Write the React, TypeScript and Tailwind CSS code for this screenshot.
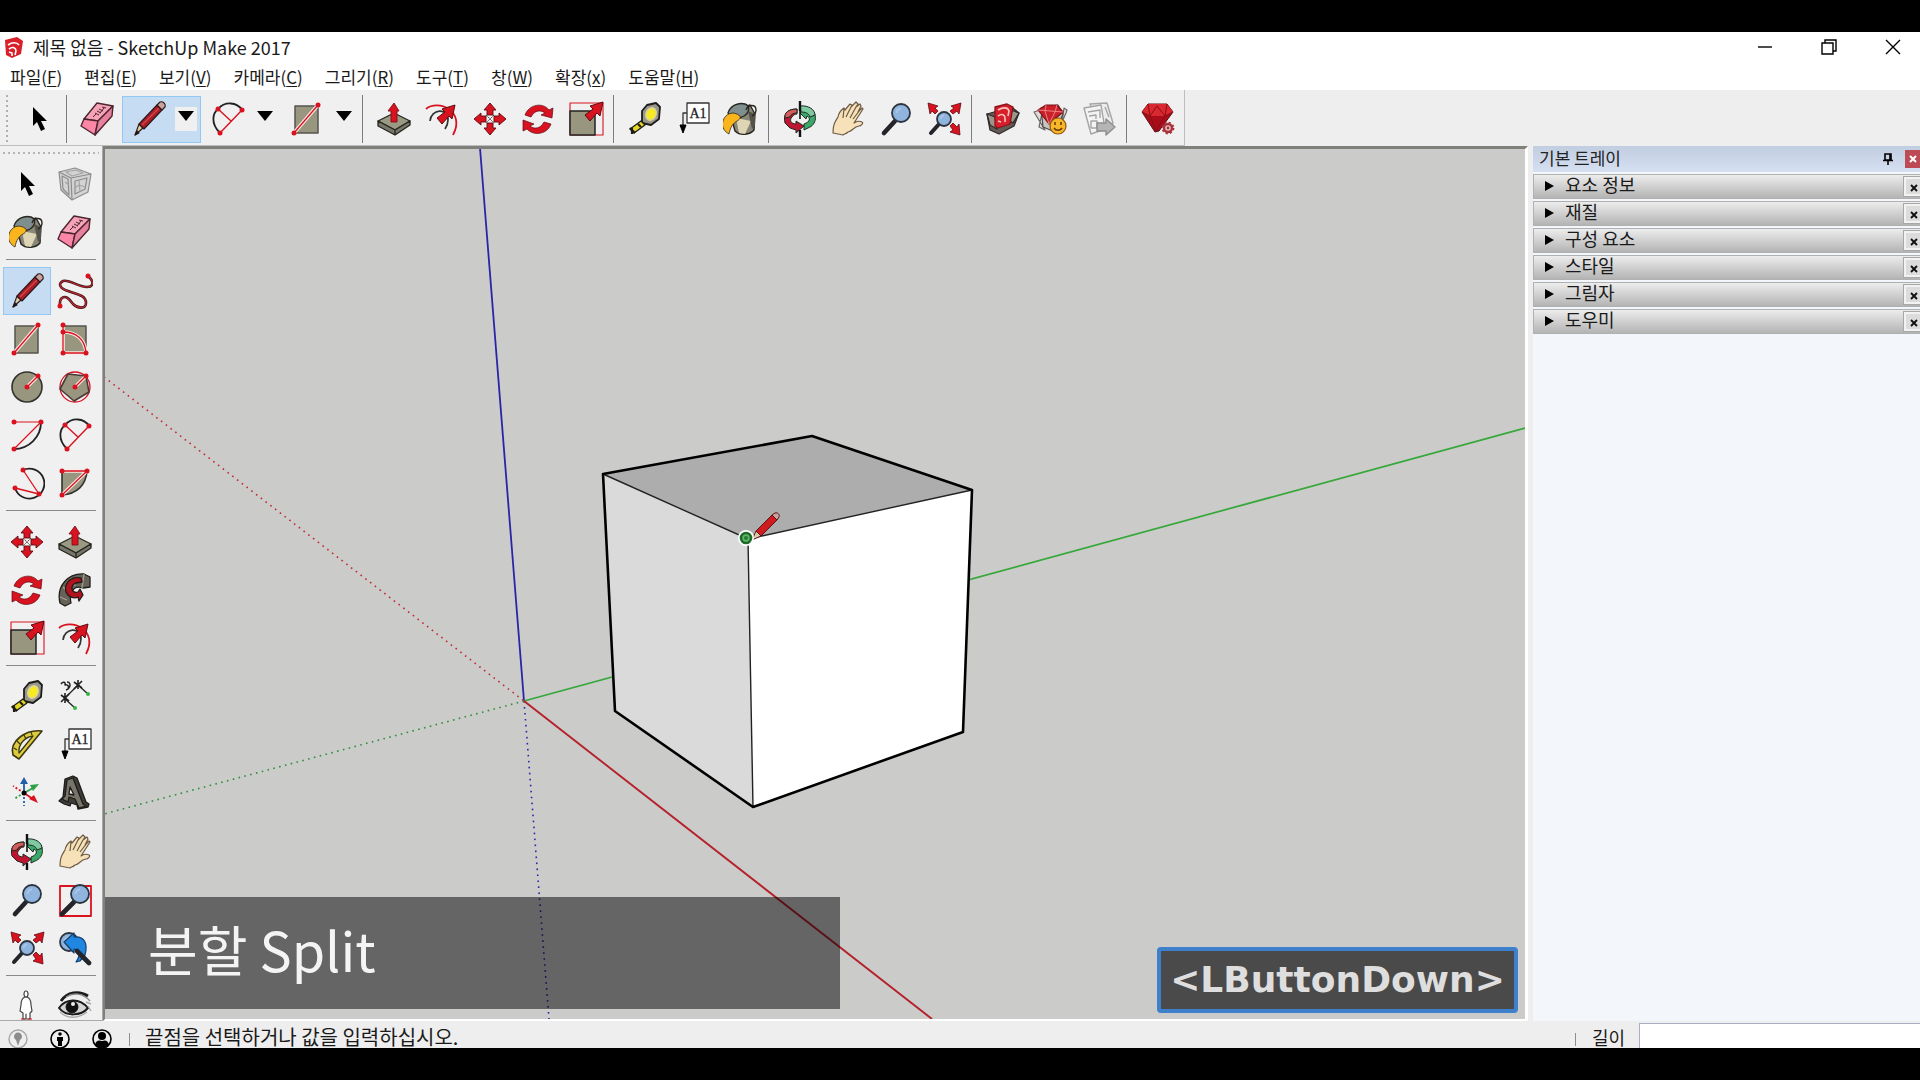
import type { ReactNode } from "react";
import clsx from "clsx";

const RED = "#d9121f";
const OLIVE = "#98967f";

function Icon({ children }: { children: ReactNode }) {
  return (
    <svg viewBox="0 0 36 36" className="size-9 shrink-0" fill="none" strokeLinejoin="round" aria-hidden="true">
      {children}
    </svg>
  );
}

const Dots = ({ at }: { at: [number, number][] }) => (
  <g fill={RED}>
    {at.map(([x, y]) => (
      <circle key={`${x}-${y}`} cx={x} cy={y} r="2.5" />
    ))}
  </g>
);

const Guide = ({ d }: { d: string }) => (
  <g>
    <path d={d} stroke="#fbe9e4" strokeWidth="3.6" />
    <path d={d} stroke={RED} strokeWidth="1.3" />
  </g>
);

const Lens = ({ cx, cy, r }: { cx: number; cy: number; r: number }) => (
  <g>
    <circle cx={cx} cy={cy} r={r} fill="#8fb4dd" stroke="#2c3440" strokeWidth="1.8" />
    <path d={`M${cx - r / 2} ${cy}a${r / 2} ${r / 2} 0 0 1 ${r / 2} -${r / 2}`} stroke="#a9c6e8" strokeWidth="2" />
  </g>
);

const DiagonalArrow = ({ x, y }: { x: number; y: number }) => (
  <path
    transform={`translate(${x} ${y})`}
    d="M18 0 5 4l3 3-8 6 5 6 7-8 3 3z"
    fill={RED}
    stroke="#5c0c12"
    strokeWidth="1"
  />
);

const icons = {
  select: <path d="M12 6v19l4-4 4 9 4-2-4-8h6z" fill="#000" />,
  component: (
    <g stroke="#8d8d8d" strokeWidth="1.2">
      <path d="M2 6 18 2l16 6-3 18-16 8L4 24z" fill="#d3d3d3" />
      <path d="M2 6l12 6 20-4M14 12l1 22M5 10l6 3 1 16-6-6zM18 15l12-3-2 11-10 5z" />
      <path d="M9 6l10-2 7 3-11 3zM8 16l4 3M18 22l4-3 6 2M22 14l1 12" stroke="#a5a5a5" />
    </g>
  ),
  bucket: (
    <g stroke="#28261f" strokeWidth="1.4">
      <path d="M7 12 12 30c5 5 15 4 19-1l1-16-5-9z" fill="#8a8678" />
      <path d="M13 17l3 15 6 1 6-13z" fill="#ddd5b4" stroke="none" />
      <path d="M25 10l4 18 3-3V13z" fill="#55524a" stroke="none" />
      <path d="M5 12C7 5 15 1 22 3c5 2 5 8-1 12-5 3-11 3-16-3z" fill="#7f8f90" />
      <path d="M23 9c2-6 10-6 10 0 0 3-2 5-4 6" />
      <path d="M17 15C10 9 2 13 0 20c-2 6 2 11 6 13 1-6 4-11 8-13 2-1 4-3 3-5z" fill="#fab51c" strokeWidth="0.8" />
    </g>
  ),
  eraser: (
    <g stroke="#4b2630" strokeWidth="1.4">
      <path d="M4 18 17 2l16 3-15 15z" fill="#f6a3b8" />
      <path d="M4 18 1 25l14 9 3-14z" fill="#fb86a6" />
      <path d="M18 20 33 5l-1 10-17 19z" fill="#e8819d" />
      <path d="M13 16l3-3M15 12l4 2M17 10l4 2M19 8l4 2M22 6l4 1M20 12l4-5" strokeWidth="1" />
    </g>
  ),
  pencil: (
    <g stroke="#2b1717" strokeWidth="1.1">
      <path d="M4 34l4-11 4 4z" fill="#d8cda6" />
      <path d="M8 23 26 4l5 5-18 19z" fill="#a81d26" />
      <path d="M11 24 28 7" stroke="#d0484e" strokeWidth="1.3" />
      <path d="M26 4l3-3c3-1 6 2 5 5l-3 3z" fill="#c9a3a0" />
      <path d="M4 34l2-4 2 2z" fill="#111" />
    </g>
  ),
  freehand: (
    <g>
      <path
        d="M31 3c7 6 5 11-1 11C20 14 13 6 6 8c-6 3-2 8 5 10 8 3 18 4 18 12 0 6-8 6-13 1-4-5-7-9-11-6-3 2-2 5-2 9"
        stroke="#3b1717"
        strokeWidth="2.6"
      />
      <path
        d="M31 3c7 6 5 11-1 11C20 14 13 6 6 8c-6 3-2 8 5 10 8 3 18 4 18 12 0 6-8 6-13 1-4-5-7-9-11-6-3 2-2 5-2 9"
        stroke="#c02531"
        strokeWidth="1.2"
      />
      <Dots at={[[31, 3], [3, 33]]} />
    </g>
  ),
  rectangle: (
    <g>
      <path d="M6 5h23v27H6z" fill={OLIVE} stroke="#55544c" strokeWidth="1.5" />
      <Guide d="M5 32 29 4" />
      <Dots at={[[5, 32], [29, 4]]} />
    </g>
  ),
  rotatedRect: (
    <g>
      <path d="M6 5h23v27H6z" fill={OLIVE} stroke="#55544c" strokeWidth="1.5" />
      <Guide d="M6 4v28h23M6 11c13 0 22 7 23 21" />
      <Dots at={[[6, 4], [6, 11], [6, 32], [29, 32]]} />
    </g>
  ),
  circle: (
    <g>
      <circle cx="18" cy="18" r="15" fill={OLIVE} stroke="#33332e" strokeWidth="1.6" />
      <Guide d="M18 18 29 7" />
      <Dots at={[[18, 18], [29, 7]]} />
    </g>
  ),
  polygon: (
    <g>
      <circle cx="18" cy="18" r="15" stroke={RED} strokeWidth="1.3" />
      <path d="M11 5 29 7l3 16-15 9L3 20z" fill={OLIVE} stroke="#4a3a36" strokeWidth="1.6" />
      <Guide d="M18 18 29 7" />
      <Dots at={[[18, 18], [29, 7]]} />
    </g>
  ),
  arc: (
    <g>
      <path d="M5 32C20 32 32 20 32 5" stroke="#222" strokeWidth="1.8" />
      <path d="M5 5h27L5 32" stroke={RED} strokeWidth="1.2" />
      <Dots at={[[5, 5], [32, 5], [5, 32]]} />
    </g>
  ),
  twoPointArc: (
    <g>
      <path d="M10 32C0 22 3 12 8 8 15 0 27 1 32 9" stroke="#222" strokeWidth="1.8" />
      <path d="M10 32 32 9M8 8l13 12" stroke={RED} strokeWidth="1.4" />
      <Dots at={[[8, 8], [32, 9], [10, 32]]} />
    </g>
  ),
  threePointArc: (
    <g>
      <path d="M14 5a15 15 0 1 1-8 18" stroke="#222" strokeWidth="1.8" />
      <path d="M14 5l16 24L6 23" stroke={RED} strokeWidth="1.3" />
      <Dots at={[[14, 5], [6, 23], [30, 29]]} />
    </g>
  ),
  pie: (
    <g>
      <path d="M5 6h25C29 20 20 29 5 30z" fill={OLIVE} stroke="#33332e" strokeWidth="1.6" />
      <Guide d="M5 6h25L5 30" />
      <Dots at={[[5, 6], [30, 6], [5, 30]]} />
    </g>
  ),
  move: (
    <g fill={RED} stroke="#5c0c12" strokeWidth="0.9">
      {[0, 90, 180, 270].map((a) => (
        <path key={a} transform={`rotate(${a} 18 18)`} d="M18 2l6 7h-3v5h-6V9h-3z" />
      ))}
      <path d="M14 14l8 8M22 14l-8 8" stroke="#444" strokeWidth="1" strokeDasharray="2 1" />
    </g>
  ),
  rotate: (
    <g fill={RED} stroke="#5c0c12" strokeWidth="0.7">
      <path d="M5 14C9 3 23 1 29 9l4-2-1 10-11-3 4-2c-5-4-11-2-14 4z" />
      <path d="M31 23C27 34 13 35 7 28l-4 2 0-11 11 4-4 2c5 4 11 2 14-4z" />
    </g>
  ),
  pushPull: (
    <g stroke="#26261f" strokeWidth="1.3">
      <path d="M2 20 18 12l16 8-15 9z" fill="#9a9983" />
      <path d="M2 20v5l17 9v-5zM34 20v4l-15 10v-5z" fill="#77766a" />
      <path d="M18 2l5 8h-2v11h-6V10h-3z" fill={RED} stroke="#7d1016" strokeWidth="0.9" />
    </g>
  ),
  followMe: (
    <g stroke="#1e1d1b" strokeWidth="1.3">
      <path d="M3 31C-1 14 11 1 27 2l6 3v10l-7 1C16 12 12 22 14 31l-6 3z" fill="#676258" />
      <path d="M3 25l7 3M6 15l6 6M14 6l4 8M27 2l-2 14" stroke="#a5a090" />
      <path d="M24 6C12 4 7 13 9 20c2 5 8 7 12 5l1 4 4-6-3-6-2 3c-6 2-9-6-2-9l6-1z" fill="#b3121d" />
    </g>
  ),
  scale: (
    <g>
      <path d="M2 2h33v32H2z" stroke={RED} strokeWidth="1.1" />
      <path d="M2 10h25v24H2z" fill={OLIVE} stroke="#222" strokeWidth="1.5" />
      <DiagonalArrow x={17} y={1} />
    </g>
  ),
  offset: (
    <g>
      <path d="M2 8C14-2 42 10 29 34" stroke={RED} strokeWidth="1.8" />
      <path d="M6 20c1-12 18-14 18-1 0 4-1 6-3 9" stroke="#333" strokeWidth="1.7" />
      <DiagonalArrow x={13} y={4} />
    </g>
  ),
  tape: (
    <g stroke="#1c1c18" strokeWidth="1.3">
      <path d="M15 10 20 4l9-2 4 4-1 12-8 6-9-2z" fill="#99968c" strokeWidth="1.8" />
      <ellipse cx="24" cy="13" rx="5" ry="6.5" transform="rotate(25 24 13)" fill="#f7ea21" stroke="#d8d4a8" />
      <path d="M14 20l4 4L7 32l-4-4z" fill="#e6d822" />
      <path d="M3 27l5 5M5 27v6M11 23l3 3" strokeWidth="2.2" />
    </g>
  ),
  dimension: (
    <g stroke="#222" strokeWidth="1.3">
      <path d="M8 19 21 6M7 19l11 10M21 6l10 9" />
      <path d="M4 16l8 6M12 15l-8 8M17 3l8 6M25 2l-8 8M21 1v9M8 14v10" strokeWidth="1.6" />
      <path d="M4 5c2-3 5-2 4 1 4-1 5 4 1 5M10 3c3 0 4 3 2 6" strokeWidth="1.5" />
      <g fill="#38b54a" stroke="none">
        <circle cx="18" cy="29" r="2" />
        <circle cx="31" cy="15" r="2" />
      </g>
    </g>
  ),
  protractor: (
    <g>
      <path d="M33 4C17 2 0 14 4 28l6 4z" fill="#dccb3b" stroke="#3d3814" strokeWidth="1.6" />
      <path d="M24 9C16 10 9 17 10 26z" fill="#efeeee" stroke="#3d3814" strokeWidth="1.3" />
      <path d="M5 21l3 2M8 14l3 3M15 8l2 4M22 5l1 3" stroke="#3d3814" strokeWidth="1.2" />
    </g>
  ),
  text: (
    <g>
      <path d="M12 2h22v20H12z" fill="#fff" stroke="#333" strokeWidth="1.3" />
      <path d="M12 12H8v14" stroke="#333" strokeWidth="1.3" />
      <path d="M5 24h6l-3 8z" fill="#000" stroke="#000" />
      <text x="23" y="17" textAnchor="middle" fontSize="14" fill="#222" stroke="#222" strokeWidth="0.3" className="font-['Liberation_Serif',serif]">
        A1
      </text>
    </g>
  ),
  axes: (
    <g strokeWidth="1.8">
      <path d="M15 18V8" stroke="#1f5fa8" />
      <path d="M11 9l4-7 4 7z" fill="#1f5fa8" />
      <path d="M15 18l9-5" stroke="#2e9e45" />
      <path d="M21 10l9-1-6 7z" fill="#2e9e45" />
      <path d="M15 18l9 6" stroke={RED} />
      <path d="M20 24l9 4-4-8z" fill={RED} />
      <path d="M15 18v13" stroke="#1f5fa8" strokeDasharray="2 2" />
      <path d="M15 18 5 24" stroke="#2e9e45" strokeDasharray="2 2" />
      <path d="M15 18 4 11" stroke={RED} strokeDasharray="2 2" />
      <circle cx="15" cy="18" r="2.5" fill="#000" />
    </g>
  ),
  text3d: (
    <g stroke="#1d1c1a" strokeWidth="1.3">
      <path d="M8 4l8-3 4 2 9 24 3 2-1 3-10 2-1-4-6-2-1 3-6-2-5-3 4-4z" fill="#3f3d38" />
      <path d="M10 5l6-2 10 26 3 2-7 2-4-9-6-2-1 5-6-3 3-3z" fill="#77746a" />
      <path d="M13 12l4 8-5-1z" fill="#f1f0f1" />
    </g>
  ),
  orbit: (
    <g stroke="#1d2a22" strokeWidth="1">
      <path d="M20 6l8 2c8 4 7 16-2 19l-4 2v-6c6-2 7-6 3-8l-1 3-6-6z" fill="#3ba768" />
      <path d="M18 5c9-1 15 4 15 9l-5 2c-1-4-5-5-9-5z" fill="#7fc9a0" />
      <path d="M15 8C4 8 1 15 3 22l5 5 6 2v3l8-7-8-5v3c-5 0-7-4-4-7 1-2 3-3 5-3z" fill="#c01530" />
      <path d="M15 8C6 8 2 12 3 17l5-1c1-3 4-4 7-4z" fill="#d35b59" />
      <path d="M18 0v10M18 29v7" stroke="#111" strokeWidth="2.4" />
      <path d="M18 10v8" stroke="#111" strokeWidth="1.6" />
    </g>
  ),
  hand: (
    <path
      d="M3 32c0-9 2-11 5-16 1-5 3-7 6-9l1 2 5-6 2 1-1 2 5-5 2 2-2 3 4-3 1 2-3 6 4-4 1 1-9 14c2-1 4-3 8-1 2 1-1 4-3 4-6 1-6 5-11 6-2 2-4 2-5 3z M14 8l-1 9M21 6l-5 10M26 6l-6 11M30 9l-7 9"
      fill="#f7e1b8"
      stroke="#6d5b45"
      strokeWidth="1.2"
    />
  ),
  zoom: (
    <g>
      <path d="M17 20 6 32" stroke="#23252a" strokeWidth="4.6" strokeLinecap="round" />
      <Lens cx={23} cy={12} r={9} />
    </g>
  ),
  zoomWindow: (
    <g>
      <path d="M3 4h31v30H3z" stroke={RED} strokeWidth="1.8" />
      <path d="M17 20 5 32" stroke="#23252a" strokeWidth="4.6" strokeLinecap="round" />
      <Lens cx={23} cy={12} r={9} />
    </g>
  ),
  zoomExtents: (
    <g>
      <path d="M14 22 5 32" stroke="#23252a" strokeWidth="4" strokeLinecap="round" />
      <Lens cx={18} cy={18} r={7} />
      <g fill={RED} stroke="#5c0c12" strokeWidth="0.8">
        <path d="M2 2l10 3-3 2 3 3-3 3-3-3-2 3zM35 2l-2 11-2-3-4 3-3-3 4-3-3-2zM34 34l-10-3 3-2-3-4 3-3 4 4 2-3z" />
      </g>
    </g>
  ),
  zoomPrevious: (
    <g>
      <Lens cx={12} cy={12} r={9} />
      <path d="M7 12 17 3v4c11-1 14 7 11 18l-5 6-4 1c4-6 5-11-2-13v4z" fill="#2086e0" stroke="#12406d" strokeWidth="1.2" />
      <path d="M20 21 32 33" stroke="#23252a" strokeWidth="4.6" strokeLinecap="round" />
    </g>
  ),
  warehouse: (
    <g strokeWidth="1.3">
      <path d="M2 13l7-2 18-5 2 2 5 4-5 13-15 8-9-4z" fill="#625b55" stroke="#2f2b29" />
      <path d="M26 9l8 3-6 10-3-2zM2 13l8 3 2 12-7-4z" fill="#9d968c" stroke="#2f2b29" />
      <path d="M10 6 22 3l6 3-3 17-12 4-3-2z" fill="#d61f2a" stroke="#8e1118" />
      <path d="M13 9c5-3 10-3 11 1l-1 5M13 15c4-3 7-1 7 2v4M13 20l3 1" stroke="#f6c3c1" strokeWidth="1.6" />
    </g>
  ),
  extensions: (
    <g strokeWidth="1.2">
      <path d="M1 11l9-3-4 18 6 3zM33 12l-4 9 2-14 3 2z" fill="#ddd9d7" stroke="#6b6765" />
      <path d="M8 7l2 19 12 5 8-18-5-9z" fill="#c9c4c2" stroke="#4b4745" />
      <path d="M5 9l8-5h11l6 7-14 12z" fill="#c9202a" stroke="#7d1016" />
      <path d="M5 9l25 2M13 4l-1 6 4 13 6-12 2-7" stroke="#f08b8c" strokeWidth="0.9" />
      <circle cx="25" cy="25" r="8" fill="#f8b62b" stroke="#8d5a0c" />
      <path d="M22 21v3M28 21v3M21 27c2 3 6 3 8 0" stroke="#6a3d06" strokeWidth="1.6" />
    </g>
  ),
  layout: (
    <g stroke="#a5a5a5" strokeWidth="1.4">
      <path d="M9 3l17-1 6 20-12 6z" fill="#ececec" />
      <path d="M3 7l17-3 4 24-14 5z" fill="#f4f4f4" />
      <path d="M7 11l12-2v8M8 15l7-1v4M10 20h6v7h-6zM24 6l4 10" />
      <path d="M16 22h9v-4l9 8-9 8v-4h-9z" fill="#b5b5b5" stroke="#8d8d8d" />
    </g>
  ),
  ruby: (
    <g strokeWidth="1">
      <path d="M2 11l6-8h19l6 8-14 19-4 1z" fill="#a90d19" stroke="#5c0c12" />
      <path d="M2 11l6-8h19l6 8-8 4H10z" fill="#d92830" />
      <path d="M2 11l8 4 6 15 9-15 8-4M8 3l2 12 7-10 8 10 2-12" stroke="#8a0d16" />
      <circle cx="28" cy="27" r="4" fill="#e8c5c5" stroke="#a83239" strokeWidth="2.4" />
      <circle cx="28" cy="27" r="5.6" stroke="#a83239" strokeWidth="1.6" strokeDasharray="2.2 2.2" />
      <circle cx="28" cy="27" r="1.4" fill="#a83239" />
    </g>
  ),
  person: (
    <g fill="#fff" stroke="#444" strokeWidth="1.2">
      <path d="M16 8c-3 1-4 4-4 8l-1 6 3 2v6h3v-5 5h4v-6l2-2-1-6c0-4-1-7-4-8z" />
      <ellipse cx="17" cy="5" rx="2" ry="3" />
      <path d="M12 30h4M19 30h4" stroke={RED} />
    </g>
  ),
  eye: (
    <g stroke="#1b1b1b">
      <path d="M4 12C10 3 22 1 31 7" strokeWidth="2.8" />
      <path d="M9 8C16 3 26 4 33 12" stroke="#888" strokeWidth="1.4" />
      <path d="M2 19C8 10 22 8 31 19c-7 8-22 9-29 0z" fill="#d5d5d5" strokeWidth="2" />
      <circle cx="15" cy="18" r="6" fill="#111" />
      <circle cx="16" cy="15" r="2" fill="#eee" stroke="none" />
      <path d="M3 23c7 7 18 7 27 0M29 13l5 2M31 17l3 5" stroke="#aaa" strokeWidth="1.4" />
    </g>
  ),
};

type IconName = keyof typeof icons;
type Tool = { icon: IconName; label: string; menu?: boolean; active?: boolean };

const toolbar: Tool[][] = [
  [{ icon: "select", label: "선택" }],
  [
    { icon: "eraser", label: "지우개" },
    { icon: "pencil", label: "선", menu: true, active: true },
    { icon: "twoPointArc", label: "호", menu: true },
    { icon: "rectangle", label: "직사각형", menu: true },
  ],
  [
    { icon: "pushPull", label: "밀기/끌기" },
    { icon: "offset", label: "오프셋" },
    { icon: "move", label: "이동" },
    { icon: "rotate", label: "회전" },
    { icon: "scale", label: "배율" },
  ],
  [
    { icon: "tape", label: "줄자" },
    { icon: "text", label: "텍스트" },
    { icon: "bucket", label: "페인트 통" },
  ],
  [
    { icon: "orbit", label: "궤도" },
    { icon: "hand", label: "이동 보기" },
    { icon: "zoom", label: "확대/축소" },
    { icon: "zoomExtents", label: "범위 확대" },
  ],
  [
    { icon: "warehouse", label: "3D Warehouse" },
    { icon: "extensions", label: "Extension Warehouse" },
    { icon: "layout", label: "LayOut" },
  ],
  [{ icon: "ruby", label: "확장 관리자" }],
];

const palette: Tool[][] = [
  [
    { icon: "select", label: "선택" },
    { icon: "component", label: "구성 요소 만들기" },
    { icon: "bucket", label: "페인트 통" },
    { icon: "eraser", label: "지우개" },
  ],
  [
    { icon: "pencil", label: "선", active: true },
    { icon: "freehand", label: "자유곡선" },
    { icon: "rectangle", label: "직사각형" },
    { icon: "rotatedRect", label: "회전된 직사각형" },
    { icon: "circle", label: "원" },
    { icon: "polygon", label: "다각형" },
    { icon: "arc", label: "호" },
    { icon: "twoPointArc", label: "2점 호" },
    { icon: "threePointArc", label: "3점 호" },
    { icon: "pie", label: "파이" },
  ],
  [
    { icon: "move", label: "이동" },
    { icon: "pushPull", label: "밀기/끌기" },
    { icon: "rotate", label: "회전" },
    { icon: "followMe", label: "따라가기" },
    { icon: "scale", label: "배율" },
    { icon: "offset", label: "오프셋" },
  ],
  [
    { icon: "tape", label: "줄자" },
    { icon: "dimension", label: "치수" },
    { icon: "protractor", label: "각도기" },
    { icon: "text", label: "텍스트" },
    { icon: "axes", label: "축" },
    { icon: "text3d", label: "3D 텍스트" },
  ],
  [
    { icon: "orbit", label: "궤도" },
    { icon: "hand", label: "이동 보기" },
    { icon: "zoom", label: "확대/축소" },
    { icon: "zoomWindow", label: "창 확대" },
    { icon: "zoomExtents", label: "범위 확대" },
    { icon: "zoomPrevious", label: "이전" },
  ],
  [
    { icon: "person", label: "카메라 배치" },
    { icon: "eye", label: "둘러보기" },
  ],
];

const menus = [
  ["파일", "F"],
  ["편집", "E"],
  ["보기", "V"],
  ["카메라", "C"],
  ["그리기", "R"],
  ["도구", "T"],
  ["창", "W"],
  ["확장", "x"],
  ["도움말", "H"],
];

const trays = ["요소 정보", "재질", "구성 요소", "스타일", "그림자", "도우미"];

function TitleBar() {
  return (
    <header className="flex h-8 shrink-0 items-center bg-white pb-[2px] pl-1">
      <svg viewBox="0 0 20 22" className="h-[22px] w-5" aria-hidden="true">
        <path d="M1 4 13 1l6 4-2 13-9 4-6-3z" fill="#d8202b" />
        <path d="M4 9c4-3 9-3 11 0M5 13c4-3 7-1 7 2l-1 4M5 16l3 1v3" fill="none" stroke="#fff" strokeWidth="1.6" />
      </svg>
      <h1 className="ml-[9px] text-lg leading-6">제목 없음 - SketchUp Make 2017</h1>
      <div className="ml-auto flex items-center gap-12 pr-[19px]">
        <button aria-label="최소화">
          <svg viewBox="0 0 16 16" className="size-4" stroke="#000" strokeWidth="1.4">
            <path d="M1 8h14" />
          </svg>
        </button>
        <button aria-label="이전 크기로 복원">
          <svg viewBox="0 0 16 16" className="size-4" fill="none" stroke="#000" strokeWidth="1.4">
            <path d="M1 4h11v11H1zM4 4V1h11v11h-3" />
          </svg>
        </button>
        <button aria-label="닫기">
          <svg viewBox="0 0 16 16" className="size-4" stroke="#000" strokeWidth="1.4">
            <path d="M1 1l14 14M15 1 1 15" />
          </svg>
        </button>
      </div>
    </header>
  );
}

function MenuBar() {
  return (
    <nav className="flex h-[26px] shrink-0 items-center gap-[22px] bg-white pl-[10px]">
      {menus.map(([name, key]) => (
        <button key={key} className="text-[17px] leading-6">
          {name}(<span className="underline underline-offset-2">{key}</span>)
        </button>
      ))}
    </nav>
  );
}

function ToolbarButton({ tool }: { tool: Tool }) {
  if (!tool.menu) {
    return (
      <button aria-label={tool.label} className="flex size-12 items-center justify-center">
        <Icon>{icons[tool.icon]}</Icon>
      </button>
    );
  }
  return (
    <div className={clsx("flex h-[47px] w-[79px] items-center border", tool.active ? "border-[#90c8f6] bg-[#c5dcf3]" : "border-transparent")}>
      <button aria-label={tool.label} className="flex w-[52px] justify-center">
        <Icon>{icons[tool.icon]}</Icon>
      </button>
      <button
        aria-label={`${tool.label} 메뉴`}
        className={clsx("flex h-6 w-[22px] items-start justify-center pt-1", tool.active && "bg-[#f1f0f1]")}
      >
        <svg viewBox="0 0 16 10" className="h-[10px] w-4" aria-hidden="true">
          <path d="M0 0h16L8 10z" />
        </svg>
      </button>
    </div>
  );
}

function Toolbar() {
  return (
    <div className="flex h-14 shrink-0 bg-[#efeeee]">
      <div className="flex h-14 items-center border-r border-b border-[#bdbdbd] bg-[#f1f0f1] pt-[3px] pr-[2px] pl-[6px]">
        <div className="mr-[7px] h-12 w-[2px] bg-[repeating-linear-gradient(to_bottom,#b0b0b0_0_2px,transparent_2px_5px)]" />
        {toolbar.map((group, i) => (
          <div key={i} className="flex items-center">
            {i > 0 && <div className="mr-[7px] ml-[3px] h-12 w-px bg-[#7d7d7d]" />}
            {group.map((tool) => (
              <ToolbarButton key={tool.icon} tool={tool} />
            ))}
          </div>
        ))}
      </div>
    </div>
  );
}

function Palette() {
  return (
    <aside className="w-[103px] shrink-0 overflow-hidden border-r border-b border-[#a9a9a9] bg-[#f1f0f1] pr-[3px] pl-[3px]">
      <div className="h-[14px] pt-[6px]">
        <div className="h-[2px] bg-[repeating-linear-gradient(to_right,#b5b5b5_0_2px,transparent_2px_5px)]" />
      </div>
      {palette.map((group, i) => (
        <div key={i}>
          {i > 0 && <div className="mx-[3px] mt-[3px] mb-[7px] h-px bg-[#8a8a8a]" />}
          <div className="grid grid-cols-2">
            {group.map((tool) => (
              <button
                key={tool.icon}
                aria-label={tool.label}
                className={clsx(
                  "flex h-12 items-center justify-center border",
                  tool.active ? "border-[#90c8f6] bg-[#c5dcf3]" : "border-transparent",
                )}
              >
                <Icon>{icons[tool.icon]}</Icon>
              </button>
            ))}
          </div>
        </div>
      ))}
    </aside>
  );
}

function Viewport() {
  return (
    <main className="relative min-w-0 flex-1 overflow-hidden border-t-[3px] border-r-[3px] border-b-2 border-l-2 border-t-[#7f7f7c] border-r-white border-b-white border-l-[#7f7f7c] bg-[#cbcbca]">
      <svg viewBox="105 149 1420 870" preserveAspectRatio="xMidYMid slice" className="absolute inset-0 h-full w-full" fill="none" aria-label="모델">
        <path d="M480 148 524 701" stroke="#2a25a8" strokeWidth="1.8" />
        <path d="M524 701l25 318" stroke="#2a25a8" strokeWidth="1.6" strokeDasharray="1.6 4.4" />
        <path d="M524 701 1525 428" stroke="#35a83a" strokeWidth="1.7" />
        <path d="M524 701 104 814" stroke="#2f8f3a" strokeWidth="1.6" strokeDasharray="1.6 4.4" />
        <path d="M104 377 524 701" stroke="#c22a34" strokeWidth="1.6" strokeDasharray="1.6 4.4" />
        <path d="M524 701 932 1019" stroke="#b5202b" strokeWidth="1.9" />
        <path d="M603 474 748 539l5 268-138-96z" fill="#dadada" />
        <path d="M603 474l209-38 160 54-224 49z" fill="#adadad" />
        <path d="M748 539l224-49-9 242-210 75z" fill="#fff" />
        <path d="M603 474l145 65 224-49M748 539l5 268" stroke="#222" strokeWidth="1.4" />
        <path d="M603 474l209-38 160 54-9 242-210 75-138-96z" stroke="#000" strokeWidth="2.6" strokeLinejoin="round" />
        <g stroke="#5a1416">
          <path d="M752 540l4-9 5 5z" fill="#d8cda6" />
          <path d="M756 531l16-16 5 5-16 16z" fill="#cf1a20" />
          <path d="M772 515l3-2c3-1 5 2 4 4l-2 3z" fill="#c9a3a0" />
        </g>
        <circle cx="746" cy="538" r="8" fill="#fff" />
        <circle cx="746" cy="538" r="5" fill="#62b765" stroke="#1c6b2b" strokeWidth="2.6" />
        <circle cx="746" cy="538" r="2" fill="#267a35" />
      </svg>
      <p className="absolute bottom-[10px] left-0 flex h-28 w-[735px] items-center bg-black/50 pb-2 pl-[43px] text-[54px] leading-none text-[#f4f4f4]">
        분할 Split
      </p>
      <div className="absolute right-[7px] bottom-[6px] flex h-[66px] w-[361px] items-center justify-center rounded-sm border-4 border-[#3f80cc] bg-[#4a4a4a] font-['DejaVu_Sans',sans-serif] text-4xl font-bold text-[#dedede]">
        &lt;LButtonDown&gt;
      </div>
    </main>
  );
}

function Tray() {
  return (
    <aside className="ml-[5px] w-[387px] shrink-0 overflow-hidden bg-[#f3f6fb]">
      <div className="mb-[2px] flex h-[26px] items-center bg-linear-to-b from-[#c1cde0] to-[#d5e1f1] pl-[6px]">
        <h2 className="pb-[2px] text-[17px] leading-6 text-[#222]">기본 트레이</h2>
        <button aria-label="자동 숨김" className="mr-3 ml-auto">
          <svg viewBox="0 0 10 12" className="h-3 w-[10px]" fill="none" stroke="#000" strokeWidth="1.6">
            <path d="M2 1h6v6H2zM0 7.5h10M5 8v4M7 1v6" />
          </svg>
        </button>
        <button aria-label="닫기" className="flex h-[18px] w-[15px] items-center justify-center bg-[#bd4b56]">
          <svg viewBox="0 0 8 8" className="size-2" stroke="#fff" strokeWidth="2">
            <path d="M1 1l6 6M7 1 1 7" />
          </svg>
        </button>
      </div>
      <ul className="flex flex-col gap-[2px]">
        {trays.map((name) => (
          <li
            key={name}
            className="flex h-[25px] items-center border-y border-l border-[#b0b0b0] bg-linear-to-b from-[#ededed] to-[#b4b4b4]"
          >
            <button className="flex flex-1 items-center gap-[11px] pb-[6px] pl-[11px] text-left text-lg leading-5 text-[#1a1a1a]">
              <svg viewBox="0 0 9 10" className="mt-1 h-[10px] w-[9px]" aria-hidden="true">
                <path d="M0 0l9 5-9 5z" />
              </svg>
              {name}
            </button>
            <button
              aria-label={`${name} 닫기`}
              className="flex h-[19px] w-4 items-center justify-end border-2 border-r-0 border-[#f2f2f2] bg-[#dcdcdc] pr-[2px] outline outline-[#a8a8a8]"
            >
              <svg viewBox="0 0 8 8" className="mt-[2px] size-2" stroke="#111" strokeWidth="1.9">
                <path d="M1 1l6 6M7 1 1 7" />
              </svg>
            </button>
          </li>
        ))}
      </ul>
    </aside>
  );
}

function StatusBar() {
  return (
    <footer className="h-[27px] shrink-0 overflow-hidden bg-[#efeeee]">
      <div className="flex h-9 items-center pl-2">
        <div className="flex gap-[22px]">
          <button aria-label="위치 정보">
            <svg viewBox="0 0 20 20" className="size-5" fill="none">
              <circle cx="10" cy="10" r="9" stroke="#a5a5a5" strokeWidth="1.4" />
              <path d="M10 17l-2-6a4 4 0 1 1 4 0z" fill="#8c8c8c" />
            </svg>
          </button>
          <button aria-label="크레딧">
            <svg viewBox="0 0 20 20" className="size-5" fill="none">
              <circle cx="10" cy="10" r="9" stroke="#000" strokeWidth="1.6" />
              <circle cx="10" cy="5" r="1.8" fill="#000" />
              <path d="M7 8h6v4h-1v5H8v-5H7z" fill="#000" />
            </svg>
          </button>
          <button aria-label="로그인">
            <svg viewBox="0 0 20 20" className="size-5" fill="none">
              <circle cx="10" cy="10" r="9" stroke="#000" strokeWidth="1.6" />
              <circle cx="10" cy="7" r="4" fill="#000" />
              <path d="M3 16c1-5 4-5 7-4 3-1 6-1 7 4-4 4-10 4-14 0z" fill="#000" />
            </svg>
          </button>
        </div>
        <div className="mr-[15px] ml-[17px] h-[13px] w-px bg-[#8d8d8d]" />
        <p className="pb-1 text-xl leading-5">끝점을 선택하거나 값을 입력하십시오.</p>
        <div className="mr-4 ml-auto h-[13px] w-px bg-[#8d8d8d]" />
        <label htmlFor="length" className="pb-1 text-lg leading-5">
          길이
        </label>
        <input id="length" className="ml-[14px] h-8 w-[281px] border border-r-0 border-[#aab0c4] bg-white px-2 text-lg outline-none" />
      </div>
    </footer>
  );
}

export default function App() {
  return (
    <div className="flex h-screen flex-col bg-black py-8 font-['Noto_Sans_CJK_KR',sans-serif] text-[#1a1a1a]">
      <TitleBar />
      <MenuBar />
      <Toolbar />
      <div className="flex min-h-0 flex-1 bg-[#efeeee]">
        <Palette />
        <Viewport />
        <Tray />
      </div>
      <StatusBar />
    </div>
  );
}
